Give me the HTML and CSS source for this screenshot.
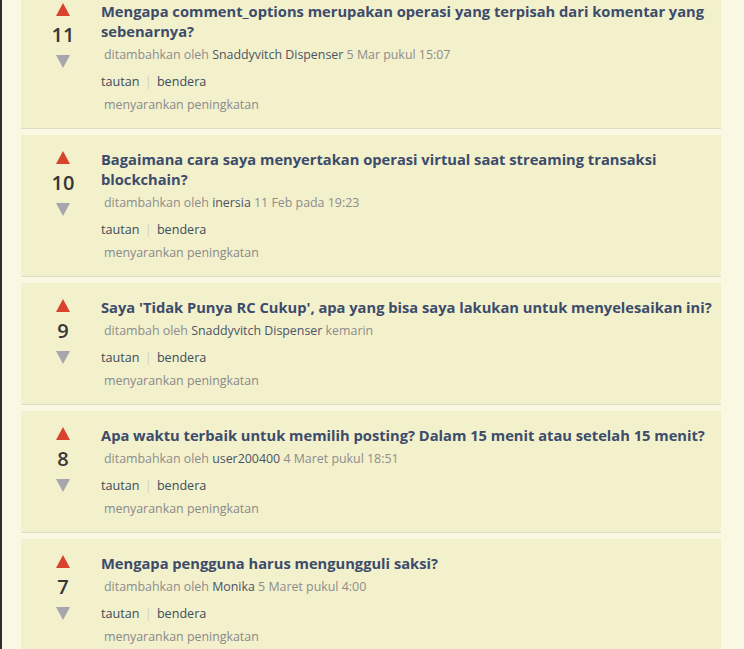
FILE: index.html
```html
<!DOCTYPE html>
<html lang="id">
<head>
<meta charset="utf-8">
<title>Pertanyaan</title>
<link rel="stylesheet" href="styles.css">
</head>
<body>
<div class="page">
  <div class="list">
    <div class="card first">
      <div class="vote">
        <svg class="arrow" viewBox="0 0 14 13"><polygon points="7,0 14,13 0,13" fill="#d8432d"/></svg>
        <div class="count">11</div>
        <svg class="arrow" viewBox="0 0 14 13"><polygon points="0,0 14,0 7,13" fill="#a6a6ae"/></svg>
      </div>
      <div class="body">
        <div class="title">Mengapa comment_options merupakan operasi yang terpisah dari komentar yang sebenarnya?</div>
        <div class="meta">ditambahkan oleh <span class="user">Snaddyvitch Dispenser</span> 5 Mar pukul 15:07</div>
        <div class="links">tautan <span class="sep">|</span> bendera</div>
        <div class="suggest">menyarankan peningkatan</div>
      </div>
    </div>
    <div class="card">
      <div class="vote">
        <svg class="arrow" viewBox="0 0 14 13"><polygon points="7,0 14,13 0,13" fill="#d8432d"/></svg>
        <div class="count">10</div>
        <svg class="arrow" viewBox="0 0 14 13"><polygon points="0,0 14,0 7,13" fill="#a6a6ae"/></svg>
      </div>
      <div class="body">
        <div class="title">Bagaimana cara saya menyertakan operasi virtual saat streaming transaksi blockchain?</div>
        <div class="meta">ditambahkan oleh <span class="user">inersia</span> 11 Feb pada 19:23</div>
        <div class="links">tautan <span class="sep">|</span> bendera</div>
        <div class="suggest">menyarankan peningkatan</div>
      </div>
    </div>
    <div class="card">
      <div class="vote">
        <svg class="arrow" viewBox="0 0 14 13"><polygon points="7,0 14,13 0,13" fill="#d8432d"/></svg>
        <div class="count">9</div>
        <svg class="arrow" viewBox="0 0 14 13"><polygon points="0,0 14,0 7,13" fill="#a6a6ae"/></svg>
      </div>
      <div class="body">
        <div class="title">Saya 'Tidak Punya RC Cukup', apa yang bisa saya lakukan untuk menyelesaikan ini?</div>
        <div class="meta">ditambah oleh <span class="user">Snaddyvitch Dispenser</span> kemarin</div>
        <div class="links">tautan <span class="sep">|</span> bendera</div>
        <div class="suggest">menyarankan peningkatan</div>
      </div>
    </div>
    <div class="card">
      <div class="vote">
        <svg class="arrow" viewBox="0 0 14 13"><polygon points="7,0 14,13 0,13" fill="#d8432d"/></svg>
        <div class="count">8</div>
        <svg class="arrow" viewBox="0 0 14 13"><polygon points="0,0 14,0 7,13" fill="#a6a6ae"/></svg>
      </div>
      <div class="body">
        <div class="title">Apa waktu terbaik untuk memilih posting? Dalam 15 menit atau setelah 15 menit?</div>
        <div class="meta">ditambahkan oleh <span class="user">user200400</span> 4 Maret pukul 18:51</div>
        <div class="links">tautan <span class="sep">|</span> bendera</div>
        <div class="suggest">menyarankan peningkatan</div>
      </div>
    </div>
    <div class="card">
      <div class="vote">
        <svg class="arrow" viewBox="0 0 14 13"><polygon points="7,0 14,13 0,13" fill="#d8432d"/></svg>
        <div class="count">7</div>
        <svg class="arrow" viewBox="0 0 14 13"><polygon points="0,0 14,0 7,13" fill="#a6a6ae"/></svg>
      </div>
      <div class="body">
        <div class="title">Mengapa pengguna harus mengungguli saksi?</div>
        <div class="meta">ditambahkan oleh <span class="user">Monika</span> 5 Maret pukul 4:00</div>
        <div class="links">tautan <span class="sep">|</span> bendera</div>
        <div class="suggest">menyarankan peningkatan</div>
      </div>
    </div>
  </div>
</div>
</body>
</html>
```
FILE: styles.css
```css
html, body {
  margin: 0;
  padding: 0;
  background: #faf8e2;
  overflow: hidden;
}
.page {
  height: 649px;
  border-left: 2px solid #2e2e2e;
  padding-left: 19px;
  font-family: "Open Sans", "DejaVu Sans", sans-serif;
  overflow: hidden;
}
.list {
  width: 700px;
  margin-top: -13px;
  display: flex;
  flex-direction: column;
  gap: 6px;
}
.card {
  background: #f3f0cc;
  border-bottom: 1px solid #dedbc8;
  display: flex;
  padding: 14px 0 13px 28px;
  min-height: 94px;
}
.vote {
  width: 28px;
  flex: none;
  display: flex;
  flex-direction: column;
  align-items: center;
  padding-top: 2px;
}
.arrow {
  width: 14px;
  height: 13px;
  display: block;
}
.count {
  font-size: 20px;
  font-weight: 600;
  color: #363636;
  line-height: 26px;
  margin: 6px 0 7px;
}
.body {
  margin-left: 24px;
  flex: 1;
  padding-right: 1px;
}
.title {
  font-size: 14.7px;
  font-weight: bold;
  line-height: 20px;
  color: #3c4c6b;
}
.meta {
  margin-top: 4px;
  padding-left: 3px;
  font-size: 12.4px;
  line-height: 20px;
  color: #8d8d8d;
}
.user {
  color: #4b5566;
}
.links {
  margin-top: 7px;
  font-size: 12.6px;
  line-height: 20px;
  color: #3e4b5b;
}
.sep {
  color: #d2d0c0;
  margin: 0 2px;
}
.suggest {
  margin-top: 3px;
  padding-left: 3px;
  font-size: 12.4px;
  line-height: 20px;
  color: #8a8a8a;
}
```
